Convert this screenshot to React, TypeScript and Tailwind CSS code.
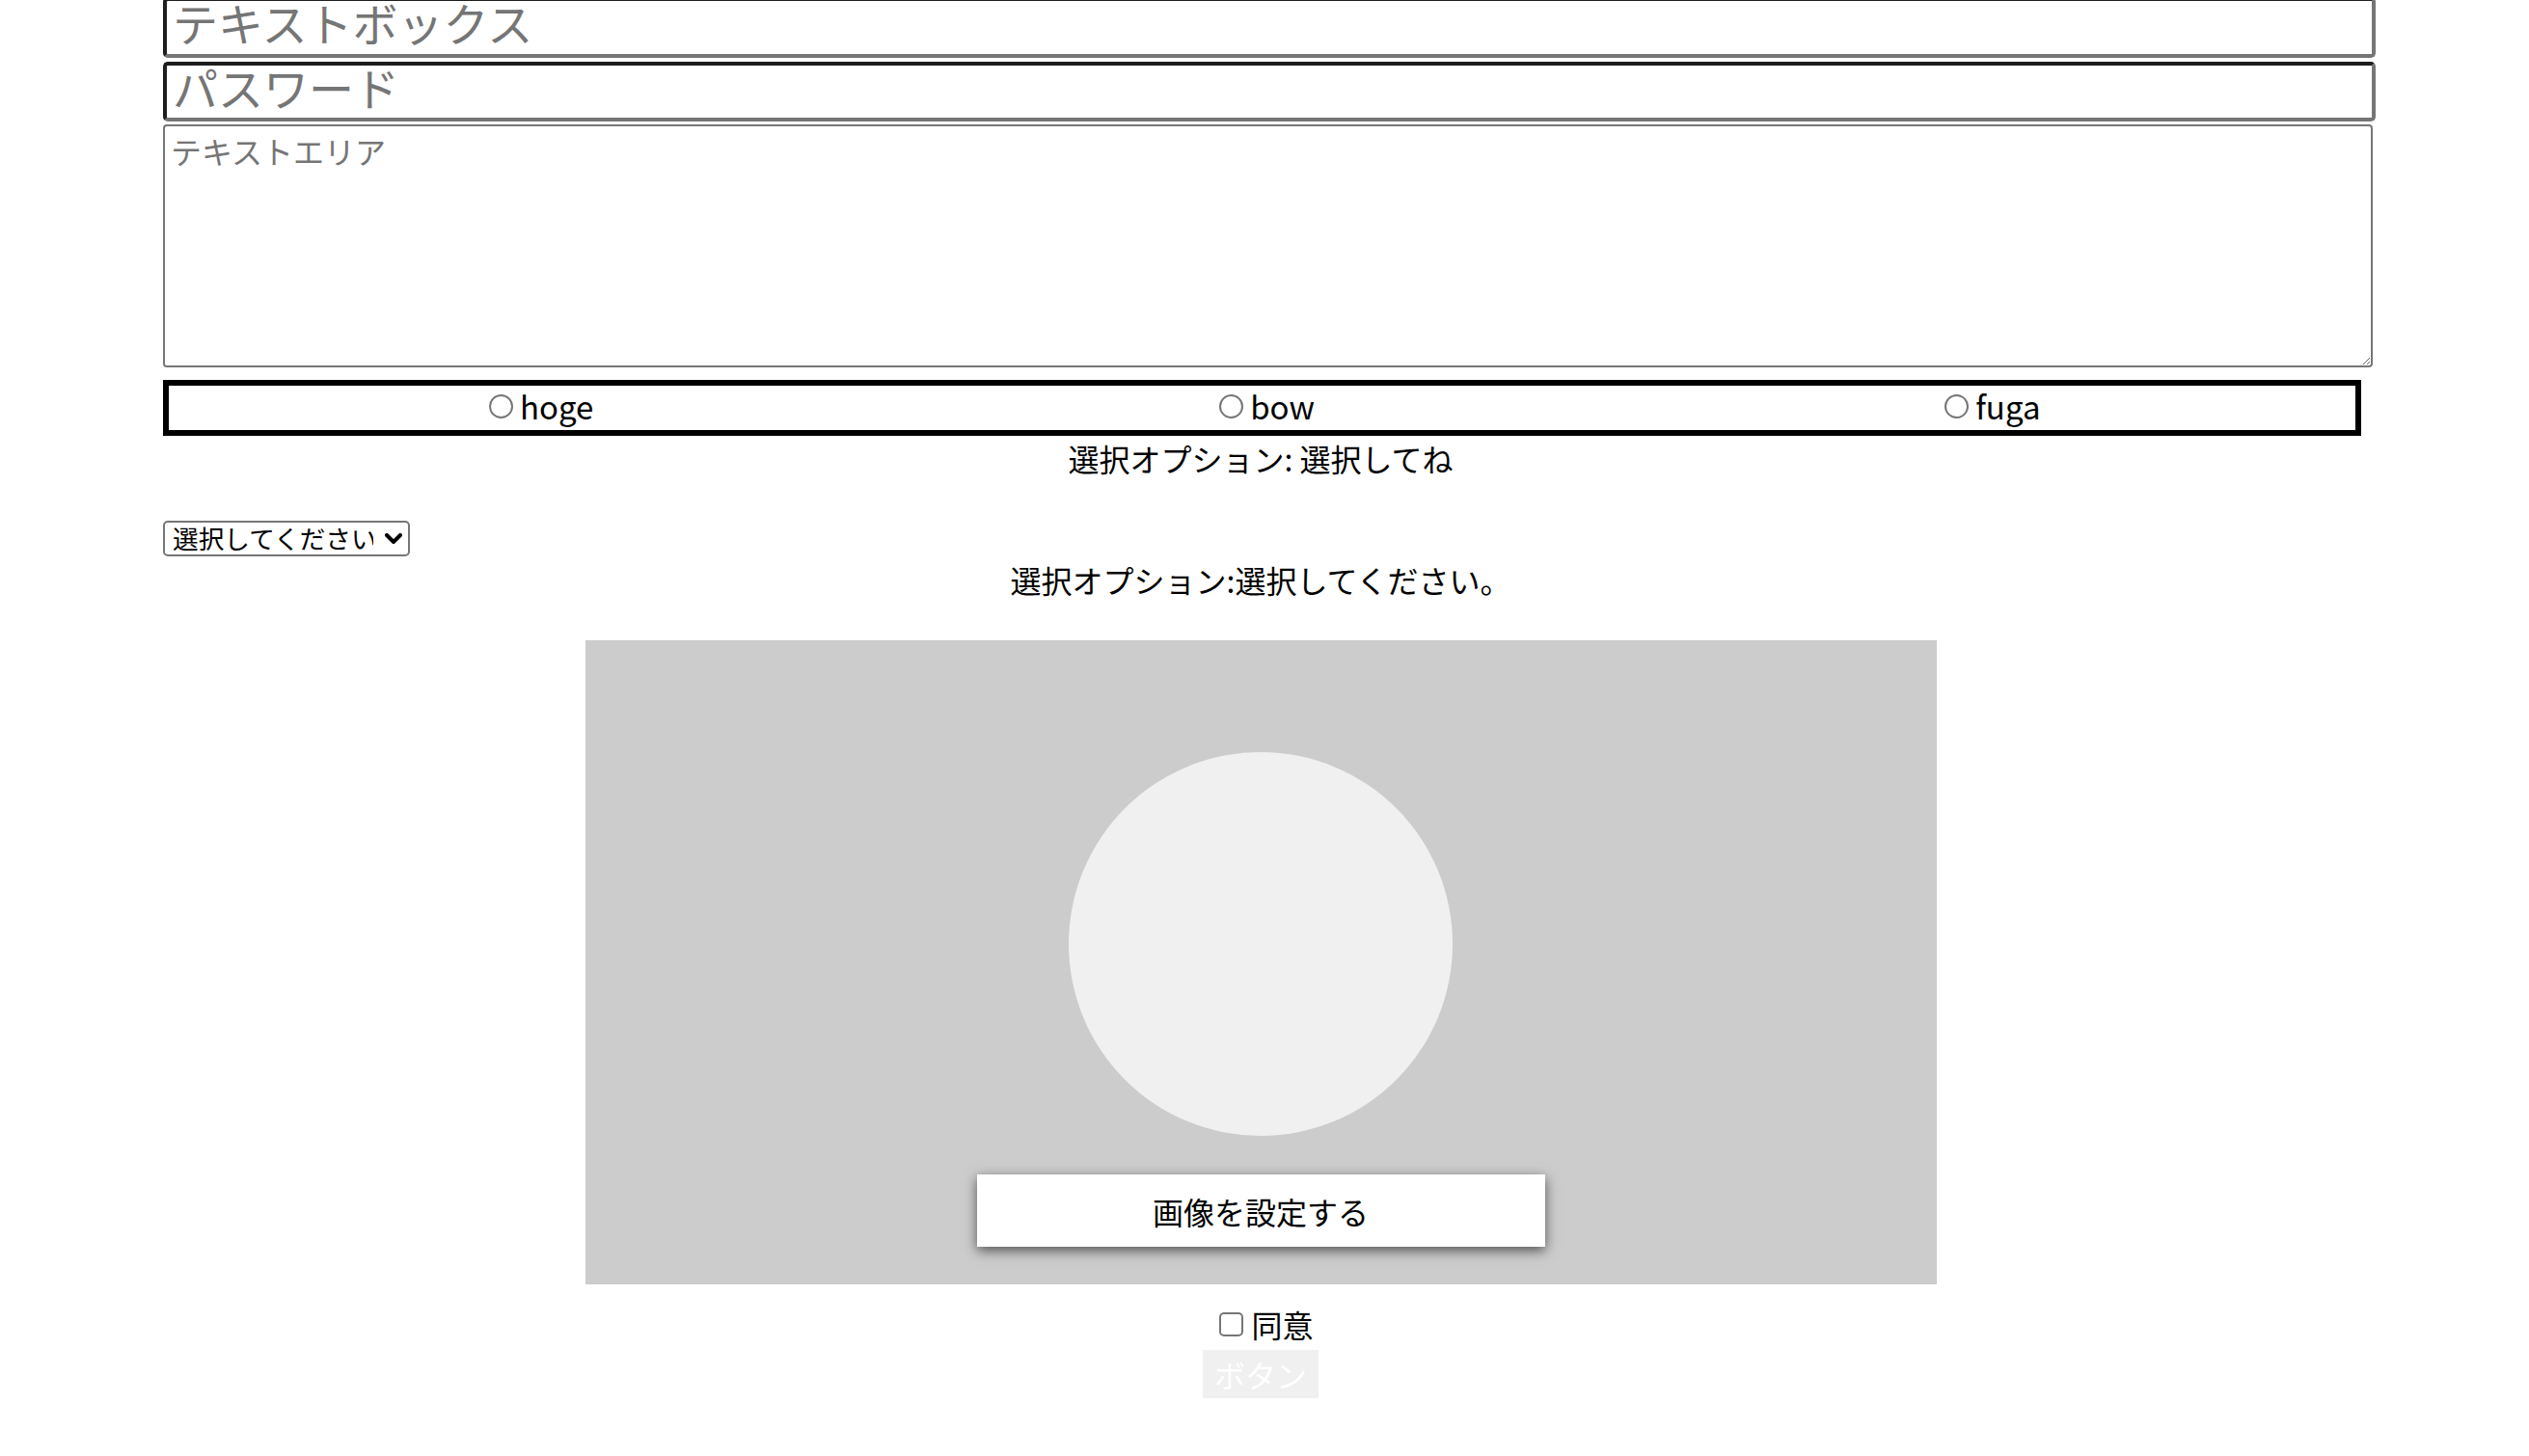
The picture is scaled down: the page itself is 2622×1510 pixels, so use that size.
import React, { useState } from 'react';

export default function App() {
  const [choice, setChoice] = useState<string>('');
  const [option, setOption] = useState<string>('');
  const [agreed, setAgreed] = useState<boolean>(false);

  const radios = ['hoge', 'bow', 'fuga'];

  return (
    <div className="min-h-screen bg-white text-black font-['Noto_Sans_CJK_JP','Noto_Sans',sans-serif] overflow-hidden">
      <div className="ml-[169px] w-[2276px] -mt-[3px] flex flex-col">
        {/* text inputs */}
        <input
          type="text"
          placeholder="テキストボックス"
          className="w-[2294px] h-[63px] border-4 border-t-[#1e1e1e] border-l-[#1e1e1e] border-r-[#767676] border-b-[#767676] rounded-[5px] px-[6px] pb-[12px] text-[47px] leading-none placeholder:text-[#757575] outline-none"
        />
        <input
          type="password"
          placeholder="パスワード"
          className="mt-[4px] w-[2294px] h-[62px] border-4 border-t-[#1e1e1e] border-l-[#1e1e1e] border-r-[#767676] border-b-[#767676] rounded-[5px] px-[6px] pb-[12px] text-[47px] leading-none placeholder:text-[#757575] outline-none"
        />
        <textarea
          placeholder="テキストエリア"
          className="mt-[3px] w-[2291px] h-[252px] border-2 border-[#767676] rounded-[4px] px-[6px] py-[2px] text-[32px] leading-[46px] placeholder:text-[#757575] outline-none resize"
        />

        {/* radio group */}
        <div className="mt-[13px] w-[2279px] h-[58px] border-[6px] border-black pl-[10px] grid grid-cols-3 items-center">
          {radios.map((r) => (
            <label key={r} className="flex items-center justify-center gap-[7px] text-[33px] leading-[40px] -mt-[4px]">
              <input
                type="radio"
                name="sample"
                value={r}
                checked={choice === r}
                onChange={() => setChoice(r)}
                className="appearance-none w-[25px] h-[25px] rounded-full border-2 border-[#767676] checked:bg-[#1a73e8] checked:border-[#1a73e8]"
              />
              <span>{r}</span>
            </label>
          ))}
        </div>
        <p className="text-center text-[32px] leading-[46px]">選択オプション: {choice || '選択してね'}</p>

        {/* select */}
        <div className="mt-[42px] relative w-[256px] h-[37px]">
          <select
            value={option}
            onChange={(e) => setOption(e.target.value)}
            className="appearance-none w-full h-full border-2 border-[#767676] rounded-[5px] pl-[8px] pr-[36px] text-[26.67px] leading-none outline-none"
          >
            <option value="">選択してください</option>
            <option value="A">A</option>
            <option value="B">B</option>
          </select>
          <svg
            className="absolute right-[8px] top-1/2 -translate-y-1/2 pointer-events-none"
            width="18"
            height="12"
            viewBox="0 0 18 12"
          >
            <path d="M2 2 L9 9 L16 2" fill="none" stroke="#000" strokeWidth="4" strokeLinecap="round" strokeLinejoin="round" />
          </svg>
        </div>
        <p className="mt-[1px] text-center text-[32px] leading-[46px]">
          選択オプション:{option || '選択してください。'}
        </p>

        {/* image setting */}
        <div className="mt-[40px] mx-auto w-[1401px] h-[668px] bg-[#cccccc] flex flex-col items-center pt-[116px]">
          <div className="w-[398px] h-[398px] rounded-full bg-[#f0f0f0]" />
          <button className="mt-[40px] w-[589px] h-[75px] bg-white text-[32px] shadow-[0_4px_12px_rgba(0,0,0,0.6)]">
            画像を設定する
          </button>
        </div>

        {/* agree */}
        <label className="mt-[18px] ml-[12px] flex items-center justify-center gap-[8px] h-[46px] text-[32px]">
          <input
            type="checkbox"
            checked={agreed}
            onChange={(e) => setAgreed(e.target.checked)}
            className="appearance-none w-[25px] h-[25px] rounded-[5px] border-2 border-[#767676] checked:bg-[#1a73e8] checked:border-[#1a73e8]"
          />
          <span>同意</span>
        </label>
        <button
          disabled={!agreed}
          className="mt-[4px] mx-auto h-[50px] px-[12px] bg-[#f0f0f0] text-white text-[32px] leading-[46px] disabled:text-white enabled:text-black"
        >
          ボタン
        </button>
      </div>
    </div>
  );
}
